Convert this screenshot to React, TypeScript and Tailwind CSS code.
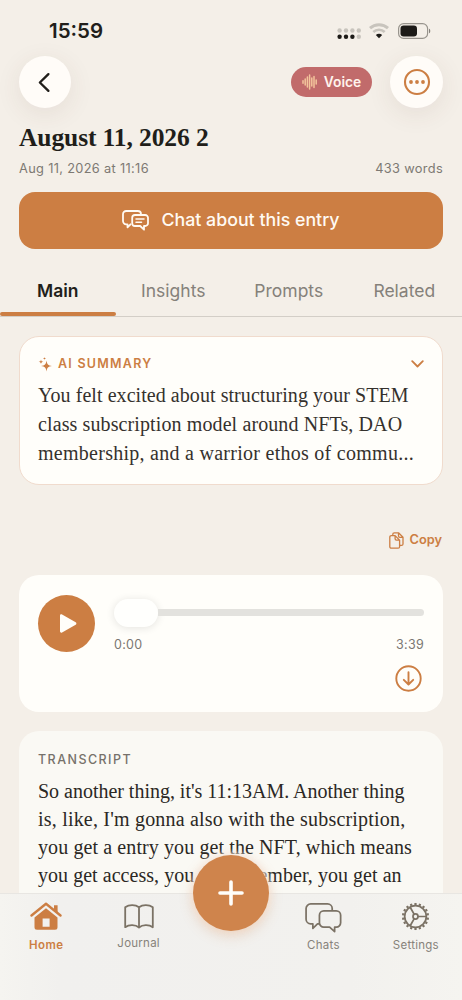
import type { ReactNode } from 'react';

const TEETH = Array.from({ length: 18 }, (_, i) => i * 20);

const SIGNAL_DOTS = [false, false, false, false, true, true, true, false];

const SUMMARY = [
  { text: 'You felt excited about structuring your STEM', tracking: 'tracking-[0.06px]' },
  { text: 'class subscription model around NFTs, DAO', tracking: 'tracking-[0.11px]' },
  { text: 'membership, and a warrior ethos of commu...', tracking: 'tracking-[0.27px]' },
];

const TRANSCRIPT = [
  { text: "So another thing, it's 11:13AM. Another thing", tracking: 'tracking-[-0.02px]' },
  { text: "is, like, I'm gonna also with the subscription,", tracking: 'tracking-[0.2px]' },
  { text: 'you get a entry you get the NFT, which means', tracking: 'tracking-[0.1px]' },
  { text: 'you get access, you are a member, you get an', tracking: 'tracking-[0.04px]' },
];

function StatusBar() {
  return (
    <div className="flex h-14 shrink-0 items-start justify-between pl-[49px] pr-[31px] pt-[18px]">
      <span className="text-[20.5px] font-semibold leading-[26px] text-[#211e1a]">15:59</span>
      <div className="flex items-center pt-[5px]">
        <svg width="24" height="16" viewBox="0 0 24 16" className="mr-2">
          {SIGNAL_DOTS.map((on, i) => (
            <circle key={i} cx={2.6 + (i % 4) * 6.4} cy={i < 4 ? 7.5 : 13.7} r="2.2" fill={on ? '#1c1a17' : '#c8c4bd'} />
          ))}
        </svg>
        <svg width="20" height="16" viewBox="0 0 20 16" fill="none" className="mr-[9px]">
          <path d="M1 5.2C6 .6 14 .6 19 5.2" stroke="#c8c4bd" strokeWidth="3" />
          <path d="M4.3 9C7.5 6 12.5 6 15.7 9" stroke="#c8c4bd" strokeWidth="2.7" />
          <path d="M6.8 12c1.8-1.7 4.6-1.7 6.4 0L10 15.300z" fill="#1c1a17" />
        </svg>
        <svg width="33" height="16" viewBox="0 0 33 16" fill="none">
          <rect x=".6" y=".6" width="29" height="14.8" rx="5" stroke="#98948d" strokeWidth="1.2" />
          <rect x="2.5" y="2.6" width="16.5" height="10.8" rx="3.2" fill="#1c1a17" />
          <path d="M31 5.7c1.7.5 1.7 4.100 0 4.600z" fill="#85817b" />
        </svg>
      </div>
    </div>
  );
}

function ChatTextIcon() {
  return (
    <svg width="27" height="21" viewBox="0 0 27 21" fill="none" stroke="#fffaf3" strokeWidth="1.8" strokeLinecap="round" strokeLinejoin="round">
      <path d="M8.500 14.300l-3 3v-3H4.200A3.200 3.200 0 011 11.100V4.200A3.200 3.200 0 014.200 1h11.600A3.200 3.200 0 0119 4.200" />
      <path d="M13 5h10.200A2.800 2.800 0 0126 7.800v5.400a2.800 2.800 0 01-2.800 2.800H22v3.700L18.200 16H13a2.800 2.800 0 01-2.800-2.800V7.800A2.800 2.800 0 0113 5z" />
      <path d="M14 9h8M14 12.300h5.500" strokeWidth="1.5" />
    </svg>
  );
}

function HomeIcon() {
  return (
    <svg width="32" height="28" viewBox="0 0 32 28" fill="#cc7e43" className="-mt-[3px]">
      <path d="M1.500 13.500L16 1.800l14.500 11.700" fill="none" stroke="#cc7e43" strokeWidth="2.4" strokeLinecap="round" strokeLinejoin="round" />
      <path d="M24 3.300h3.600v7.200L24 7.600z" />
      <path fillRule="evenodd" d="M16 6.200l11.500 9.300v9.700a2.500 2.500 0 01-2.500 2.500H7a2.500 2.500 0 01-2.500-2.500v-9.700zM12.600 16.500v8.200h7v-8.200z" />
    </svg>
  );
}

function BookIcon() {
  return (
    <svg width="30" height="25" viewBox="0 0 30 25" fill="none" stroke="#7b7265" strokeWidth="1.8" strokeLinejoin="round" className="mt-[1px]">
      <path d="M15 3.300C11.500.4 5 .4 1.200 3.200v20C5 20.400 11.500 20.500 15 23.500c3.500-3 10-3.100 13.800-.3v-20C25 .4 18.500.4 15 3.300zM15 3.300v20.200" />
    </svg>
  );
}

function ChatsIcon() {
  return (
    <svg width="37" height="30" viewBox="0 0 38 31" fill="none" stroke="#7b7265" strokeWidth="1.8" strokeLinejoin="round">
      <path d="M14.500 21.500h-1.700L8 26.200v-4.700H5.800A4.800 4.800 0 011 16.700V5.800A4.800 4.800 0 015.800 1h17.400A4.800 4.800 0 0128 5.800v2.400" />
      <path d="M19.300 8.200h12.900a4.500 4.500 0 014.500 4.500v7.800a4.500 4.500 0 01-4.500 4.500h-1.700v4.500L25.300 25h-6a4.500 4.500 0 01-4.500-4.500v-7.800a4.500 4.500 0 014.500-4.500z" />
    </svg>
  );
}

function GearIcon() {
  return (
    <svg width="29" height="29" viewBox="-15 -15 30 30" fill="none" stroke="#7b7265" strokeWidth="1.8" className="-mt-[2px]">
      <circle r="11.200" />
      <circle r="2.600" />
      <path d="M2.600 0H11M-1.300-2.250L-5.500-9.600M-1.300 2.250L-5.500 9.600" />
      {TEETH.map((deg) => (
        <path key={deg} d="M11.800 0H14" strokeWidth="2.300" transform={`rotate(${deg + 10})`} />
      ))}
    </svg>
  );
}

function Header() {
  return (
    <header className="flex h-[52px] shrink-0 items-center px-[19px]">
      <button className="flex size-[52px] items-center justify-center rounded-full bg-[#fffcf8] shadow-[0_6px_26px_rgba(90,60,40,0.09)]">
        <svg width="13" height="21" viewBox="0 0 14 22" fill="none" stroke="#211e1a" strokeWidth="2.5" strokeLinecap="round" strokeLinejoin="round" className="mr-[2px]">
          <path d="M11.200 2L2 11l9.200 9" />
        </svg>
      </button>
      <div className="ml-auto flex h-[30px] w-[81px] items-center justify-center gap-[7px] rounded-full bg-[#c16b6b]">
        <svg width="15" height="16" viewBox="0 0 15 16" stroke="#f3c59c" strokeWidth="1.5" strokeLinecap="round">
          <path d="M1 6.800v2.400M3.200 5v6M5.400 3v10M7.600 1v14M9.800 4v8M12 2.500v11M14.200 6v4" />
        </svg>
        <span className="text-[13.8px] font-semibold text-[#fff3ec]">Voice</span>
      </div>
      <button className="ml-[18px] flex h-[52px] w-[53px] items-center justify-center rounded-full bg-[#fffcf8] shadow-[0_6px_26px_rgba(90,60,40,0.09)]">
        <svg width="28" height="28" viewBox="0 0 28 28" fill="#cc7e43">
          <circle cx="14" cy="14" r="12" fill="none" stroke="#cc7e43" strokeWidth="2.100" />
          <circle cx="8" cy="14" r="1.900" />
          <circle cx="14" cy="14" r="1.900" />
          <circle cx="20" cy="14" r="1.900" />
        </svg>
      </button>
    </header>
  );
}

function Tab({ label, active }: { label: string; active?: boolean }) {
  return (
    <div className={`relative flex h-full flex-1 items-center justify-center text-[17.5px] ${active ? 'font-semibold text-[#211e1a]' : 'text-[#85817a]'}`}>
      {label}
      {active && <span className="absolute bottom-0 left-0 h-[4px] w-full rounded-full bg-[#cc7e43]" />}
    </div>
  );
}

function SummaryCard() {
  return (
    <section className="mx-[19px] mt-[19px] h-[149px] shrink-0 rounded-[20px] border border-[#f0dbcd] bg-[#fffefa] px-[18px] pt-[18px]">
      <div className="flex h-[18px] items-center text-[#cc7e43]">
        <svg width="15" height="15" viewBox="0 0 15 15" fill="currentColor">
          <path d="M8.500 3.500c.6 3.900 1.500 4.800 5.500 5.500-4 .7-4.900 1.600-5.500 5.500C7.900 10.600 7 9.700 3 9c4-.7 4.900-1.600 5.500-5.500z" />
          <path d="M3 2.500c.3 1.600.7 2 2.400 2.300C3.700 5.100 3.300 5.500 3 7.100 2.700 5.500 2.300 5.100.6 4.800 2.300 4.500 2.700 4.100 3 2.500zM6.500 0c.2 1 .5 1.300 1.500 1.500-1 .2-1.300.5-1.500 1.500C6.300 2 6 1.700 5 1.500 6 1.300 6.300 1 6.500 0z" />
        </svg>
        <span className="ml-[5px] text-[12.5px] font-semibold tracking-[1.25px]">AI SUMMARY</span>
        <svg width="13" height="8" viewBox="0 0 13 8" fill="none" stroke="currentColor" strokeWidth="1.8" strokeLinecap="round" strokeLinejoin="round" className="ml-auto">
          <path d="M1.200 1.200l5.300 5.300 5.300-5.300" />
        </svg>
      </div>
      <p className="mt-[8px] whitespace-nowrap font-['Liberation_Serif',serif] text-[20px] leading-[29px] text-[#35312d]">
        {SUMMARY.map((line) => (
          <span key={line.text} className={`block ${line.tracking}`}>{line.text}</span>
        ))}
      </p>
    </section>
  );
}

function AudioPlayer() {
  return (
    <section className="mx-[19px] mt-[26px] flex h-[137px] shrink-0 rounded-[20px] bg-[#fffefa] px-[19px] pt-5">
      <button className="flex size-[57px] shrink-0 items-center justify-center rounded-full bg-[#cc7e43]">
        <svg width="17" height="19" viewBox="0 0 18 20" fill="#fffefa" className="ml-[3px]">
          <path d="M0 1.700C0 .5 1.200-.1 2.200.5l14.400 8.200c1 .6 1 1.900 0 2.500L2.200 19.500c-1 .6-2.200 0-2.200-1.200z" />
        </svg>
      </button>
      <div className="ml-[19px] flex flex-1 flex-col">
        <div className="flex h-[34px] items-center">
          <span className="mt-[2px] h-[28px] w-[44px] rounded-full bg-[#fffffd] shadow-[0_1px_8px_rgba(0,0,0,0.11)]" />
          <span className="h-[7px] flex-1 rounded-r-full bg-[#e3e2de]" />
        </div>
        <div className="mt-[7px] flex justify-between text-[12.5px] leading-[18px] tracking-[0.3px] text-[#7b7772]">
          <span>0:00</span>
          <span>3:39</span>
        </div>
        <svg width="27" height="27" viewBox="0 0 27 27" fill="none" stroke="#cc7e43" strokeWidth="1.9" strokeLinecap="round" strokeLinejoin="round" className="ml-auto mr-[2px] mt-[11px]">
          <circle cx="13.500" cy="13.500" r="12.200" />
          <path d="M13.500 7.300v12M8.800 14.800l4.700 4.700 4.700-4.700" />
        </svg>
      </div>
    </section>
  );
}

function TranscriptCard() {
  return (
    <section className="mx-[19px] mt-[19px] h-[260px] shrink-0 rounded-t-[20px] bg-[#faf9f4] px-[19px] pt-[20px]">
      <h3 className="text-[12.5px] font-medium leading-[18px] tracking-[1.45px] text-[#76716a]">TRANSCRIPT</h3>
      <p className="mt-[8px] whitespace-nowrap font-['Liberation_Serif',serif] text-[20px] leading-[28px] text-[#2b2824]">
        {TRANSCRIPT.map((line) => (
          <span key={line.text} className={`block ${line.tracking}`}>{line.text}</span>
        ))}
      </p>
    </section>
  );
}

function NavItem({ label, active, className = '', children }: { label: string; active?: boolean; className?: string; children: ReactNode }) {
  return (
    <div className={`flex flex-1 flex-col items-center text-[11.5px] leading-[14px] ${active ? 'font-semibold tracking-[0.4px] text-[#cc7e43]' : 'tracking-[0.25px] text-[#87827a]'} ${className}`}>
      <div className="flex h-[31px] items-center">{children}</div>
      <span className="mt-[5px]">{label}</span>
    </div>
  );
}

function BottomNav() {
  return (
    <nav className="relative flex h-[107px] shrink-0 border-t border-[#e8e6e2] bg-[linear-gradient(90deg,#f5f4f0_0px,#f1f0ee_60px,#f2f1ee_350px,#f5f4f0_462px)] pt-[8px]">
      <NavItem label="Home" active><HomeIcon /></NavItem>
      <NavItem label="Journal" className="-mt-[2px]"><BookIcon /></NavItem>
      <div className="flex-1" />
      <NavItem label="Chats"><ChatsIcon /></NavItem>
      <NavItem label="Settings"><GearIcon /></NavItem>
      <button className="absolute -top-[39px] left-[193px] flex size-[76px] items-center justify-center rounded-full bg-[#cf844c] shadow-[0_4px_14px_rgba(204,126,67,0.28),0_0_5px_3px_rgba(250,240,232,0.75)]">
        <svg width="26" height="26" viewBox="0 0 26 26" stroke="#fffefa" strokeWidth="3.6" strokeLinecap="round">
          <path d="M13 2v22M2 13h22" />
        </svg>
      </button>
    </nav>
  );
}

export default function App() {
  return (
    <div className="flex h-[1000px] w-[462px] flex-col overflow-hidden bg-[#f4efe8] font-[Inter,sans-serif]">
      <main className="flex min-h-0 flex-1 flex-col overflow-hidden">
        <StatusBar />
        <Header />
        <h1 className="mx-[19px] mt-[14px] shrink-0 whitespace-nowrap font-['Liberation_Serif',serif] text-[25.5px] font-bold leading-[32px] tracking-[-0.1px] text-[#211e1a]">August 11, 2026 2</h1>
        <div className="mx-[19px] mt-[6px] flex shrink-0 justify-between text-[12.8px] leading-[18px] tracking-[0.33px] text-[#7d7973]">
          <span>Aug 11, 2026 at 11:16</span>
          <span>433 words</span>
        </div>
        <button className="mx-[19px] mt-[14px] flex h-[57px] shrink-0 items-center justify-center gap-[12px] rounded-[16px] bg-[#cc7e43] text-[17.8px] font-medium text-[#fffaf3]">
          <ChatTextIcon />
          Chat about this entry
        </button>
        <div className="mt-[17px] flex h-[51px] shrink-0 border-b border-[#d3cec7]">
          <Tab label="Main" active />
          <Tab label="Insights" />
          <Tab label="Prompts" />
          <Tab label="Related" />
        </div>
        <SummaryCard />
        <div className="mr-[20px] mt-[46px] flex h-[18px] shrink-0 items-center justify-end gap-[6px] text-[12.8px] font-semibold text-[#cc7e43]">
          <svg width="15" height="17" viewBox="0 0 15 17" fill="none" stroke="currentColor" strokeWidth="1.3" strokeLinejoin="round">
            <path d="M3.800 3.500V2.300C3.800 1.400 4.400.8 5.300.8h4.200l4.500 4.500v6.600c0 .9-.6 1.500-1.500 1.500h-1.700M9.500.8v3.100c0 .8.6 1.400 1.400 1.400H14" />
            <path d="M.8 5.200c0-1 .6-1.600 1.500-1.600h3.800l4.500 4.500v6.600c0 .9-.6 1.500-1.500 1.500H2.300c-.9 0-1.500-.6-1.500-1.500zM6.100 3.600v3.100c0 .8.600 1.400 1.400 1.400h3.100" />
          </svg>
          Copy
        </div>
        <AudioPlayer />
        <TranscriptCard />
      </main>
      <BottomNav />
    </div>
  );
}
